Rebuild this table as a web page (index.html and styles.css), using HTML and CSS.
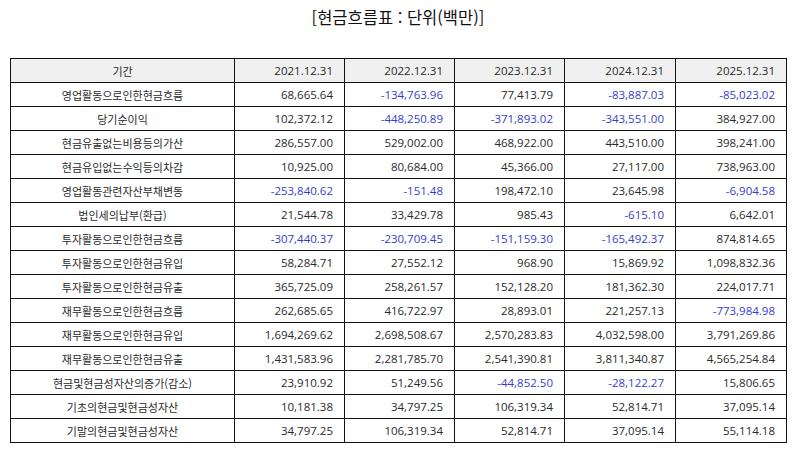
FILE: index.html
```html
<!DOCTYPE html>
<html lang="ko">
<head>
<meta charset="utf-8">
<link rel="stylesheet" href="styles.css">
</head>
<body>
<div class="page">
  <h1 class="title">[현금흐름표 : 단위(백만)]</h1>
  <table class="cf">
    <colgroup>
      <col class="c-label"><col class="c-num"><col class="c-num"><col class="c-num"><col class="c-num2"><col class="c-num2">
    </colgroup>
    <thead>
      <tr><th class="label">기간</th><th>2021.12.31</th><th>2022.12.31</th><th>2023.12.31</th><th>2024.12.31</th><th>2025.12.31</th></tr>
    </thead>
    <tbody>
      <tr><td class="label">영업활동으로인한현금흐름</td><td>68,665.64</td><td class="neg">-134,763.96</td><td>77,413.79</td><td class="neg">-83,887.03</td><td class="neg">-85,023.02</td></tr>
      <tr><td class="label">당기순이익</td><td>102,372.12</td><td class="neg">-448,250.89</td><td class="neg">-371,893.02</td><td class="neg">-343,551.00</td><td>384,927.00</td></tr>
      <tr><td class="label">현금유출없는비용등의가산</td><td>286,557.00</td><td>529,002.00</td><td>468,922.00</td><td>443,510.00</td><td>398,241.00</td></tr>
      <tr><td class="label">현금유입없는수익등의차감</td><td>10,925.00</td><td>80,684.00</td><td>45,366.00</td><td>27,117.00</td><td>738,963.00</td></tr>
      <tr><td class="label">영업활동관련자산부채변동</td><td class="neg">-253,840.62</td><td class="neg">-151.48</td><td>198,472.10</td><td>23,645.98</td><td class="neg">-6,904.58</td></tr>
      <tr><td class="label">법인세의납부(환급)</td><td>21,544.78</td><td>33,429.78</td><td>985.43</td><td class="neg">-615.10</td><td>6,642.01</td></tr>
      <tr><td class="label">투자활동으로인한현금흐름</td><td class="neg">-307,440.37</td><td class="neg">-230,709.45</td><td class="neg">-151,159.30</td><td class="neg">-165,492.37</td><td>874,814.65</td></tr>
      <tr><td class="label">투자활동으로인한현금유입</td><td>58,284.71</td><td>27,552.12</td><td>968.90</td><td>15,869.92</td><td>1,098,832.36</td></tr>
      <tr><td class="label">투자활동으로인한현금유출</td><td>365,725.09</td><td>258,261.57</td><td>152,128.20</td><td>181,362.30</td><td>224,017.71</td></tr>
      <tr><td class="label">재무활동으로인한현금흐름</td><td>262,685.65</td><td>416,722.97</td><td>28,893.01</td><td>221,257.13</td><td class="neg">-773,984.98</td></tr>
      <tr><td class="label">재무활동으로인한현금유입</td><td>1,694,269.62</td><td>2,698,508.67</td><td>2,570,283.83</td><td>4,032,598.00</td><td>3,791,269.86</td></tr>
      <tr><td class="label">재무활동으로인한현금유출</td><td>1,431,583.96</td><td>2,281,785.70</td><td>2,541,390.81</td><td>3,811,340.87</td><td>4,565,254.84</td></tr>
      <tr><td class="label">현금및현금성자산의증가(감소)</td><td>23,910.92</td><td>51,249.56</td><td class="neg">-44,852.50</td><td class="neg">-28,122.27</td><td>15,806.65</td></tr>
      <tr><td class="label">기초의현금및현금성자산</td><td>10,181.38</td><td>34,797.25</td><td>106,319.34</td><td>52,814.71</td><td>37,095.14</td></tr>
      <tr><td class="label">기말의현금및현금성자산</td><td>34,797.25</td><td>106,319.34</td><td>52,814.71</td><td>37,095.14</td><td>55,114.18</td></tr>
    </tbody>
  </table>
</div>
</body>
</html>
```
FILE: styles.css
```css
html, body {
  margin: 0;
  padding: 0;
  background: #ffffff;
}
.page {
  padding: 7px 8px 0 10px;
  font-family: "Noto Sans CJK KR", "Noto Sans", sans-serif;
  color: #222;
}
.title {
  margin: 0;
  font-size: 16.5px;
  font-weight: normal;
  line-height: 20px;
  text-align: center;
  color: #111;
  width: 776px;
}
.cf {
  margin-top: 31px;
  width: 776px;
  border-collapse: collapse;
  table-layout: fixed;
  font-family: "Open Sans", "Noto Sans CJK KR", sans-serif;
  font-size: 11.5px;
}
.c-label { width: 224px; }
.c-num { width: 110px; }
.c-num2 { width: 111px; }
.cf th, .cf td {
  border: 1px solid #111;
  height: 23px;
  padding: 0 11px 0 4px;
  text-align: right;
  font-weight: normal;
  line-height: 14px;
  white-space: nowrap;
  color: #2a2a2a;
}
.cf thead th {
  background: #f0f0f0;
}
.cf .label {
  text-align: center;
  padding: 0 4px;
  font-family: "Noto Sans CJK KR", sans-serif;
  font-size: 11px;
}
.cf .neg {
  color: #3a3ad0;
}
```
